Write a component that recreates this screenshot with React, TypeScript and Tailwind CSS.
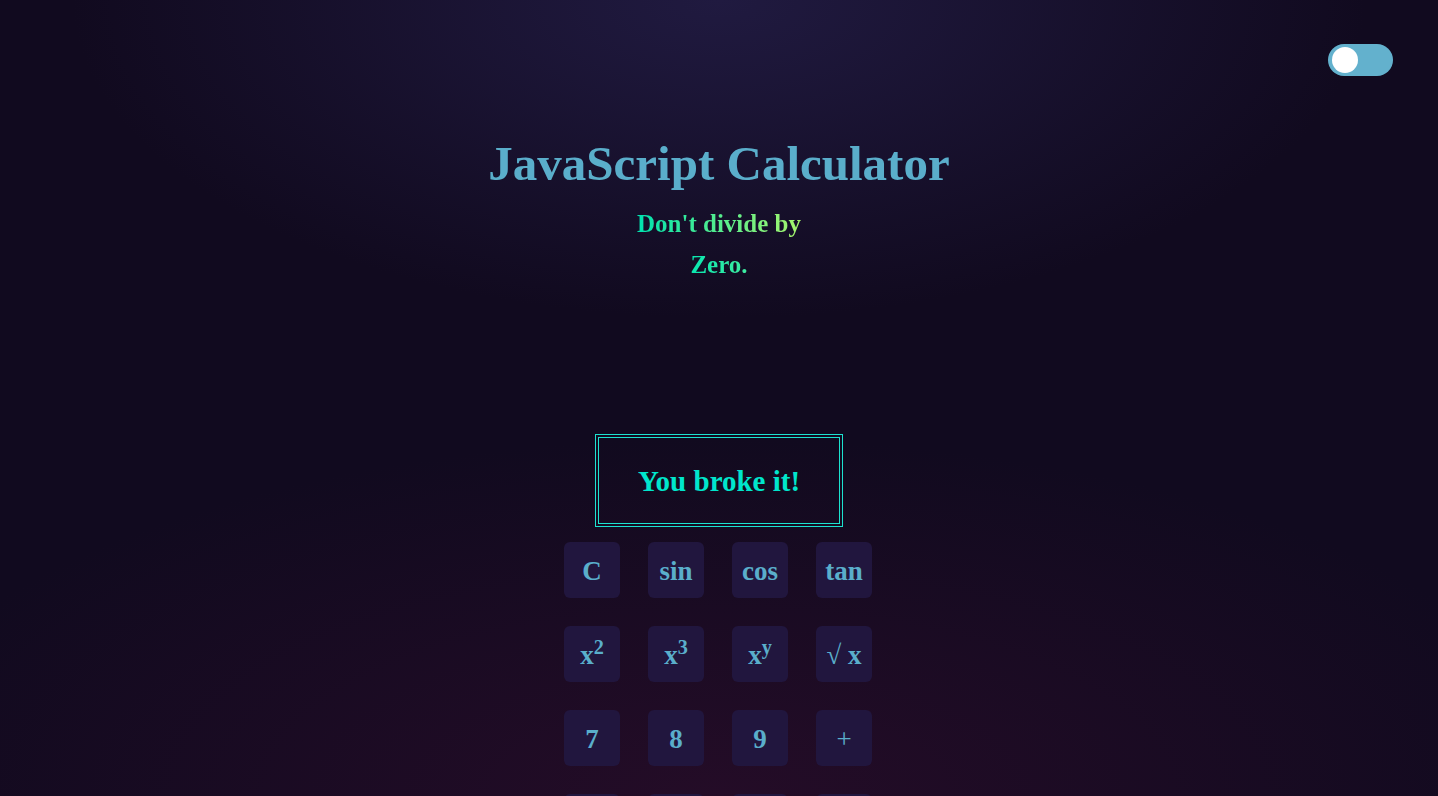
import React from "react";

const serif = { fontFamily: '"Liberation Serif", "DejaVu Serif", serif' };

const rows: React.ReactNode[][] = [
  ["C", "sin", "cos", "tan"],
  [
    <span key="x2">x<sup>2</sup></span>,
    <span key="x3">x<sup>3</sup></span>,
    <span key="xy">x<sup>y</sup></span>,
    <span key="sq">√ x</span>,
  ],
  ["7", "8", "9", <span key="plus" className="font-normal">+</span>],
  ["", "", "", ""],
];

export default function App() {
  return (
    <div
      className="relative h-[796px] w-full overflow-hidden bg-[#110a1f] bg-[radial-gradient(ellipse_45%_40%_at_50%_0%,#201a40_0%,rgba(17,10,31,0)_100%),radial-gradient(ellipse_60%_45%_at_50%_100%,#240c27_0%,rgba(17,10,31,0)_100%)]"
      style={serif}
    >
      <div className="absolute right-[45px] top-[44px] flex h-[32px] w-[65px] items-center rounded-full bg-[#63b1cd] px-[4px]">
        <div className="h-[26px] w-[26px] rounded-full bg-white" />
      </div>

      <div className="flex flex-col items-center pt-[133px]">
        <h1 className="text-[49px] font-bold leading-[62px] text-[#5aaecb]">
          JavaScript Calculator
        </h1>
        <div className="mt-[8px] flex flex-col items-center text-[25px] font-bold leading-[41px]">
          <span className="bg-[linear-gradient(to_right,#00e3b0,#a8f56c)] bg-clip-text text-transparent">
            Don't divide by
          </span>
          <span className="bg-[linear-gradient(to_right,#08e6b0,#40eca0)] bg-clip-text text-transparent">
            Zero.
          </span>
        </div>

        <div className="mt-[149px] flex h-[93px] w-[248px] items-center justify-center border-[4px] border-double border-[#1de2cf]">
          <span className="mt-[3px] text-[29px] font-bold text-[#00e6cc]">You broke it!</span>
        </div>

        <div className="mt-[15px] grid grid-cols-4 gap-[28px] pr-[2px]">
          {rows.flat().map((label, i) => (
            <button
              key={i}
              className="flex h-[56px] w-[56px] items-center justify-center rounded-[6px] bg-[#21163e] pt-[3px] text-[27px] font-bold leading-none text-[#5aaecb]"
            >
              {label}
            </button>
          ))}
        </div>
      </div>
    </div>
  );
}
